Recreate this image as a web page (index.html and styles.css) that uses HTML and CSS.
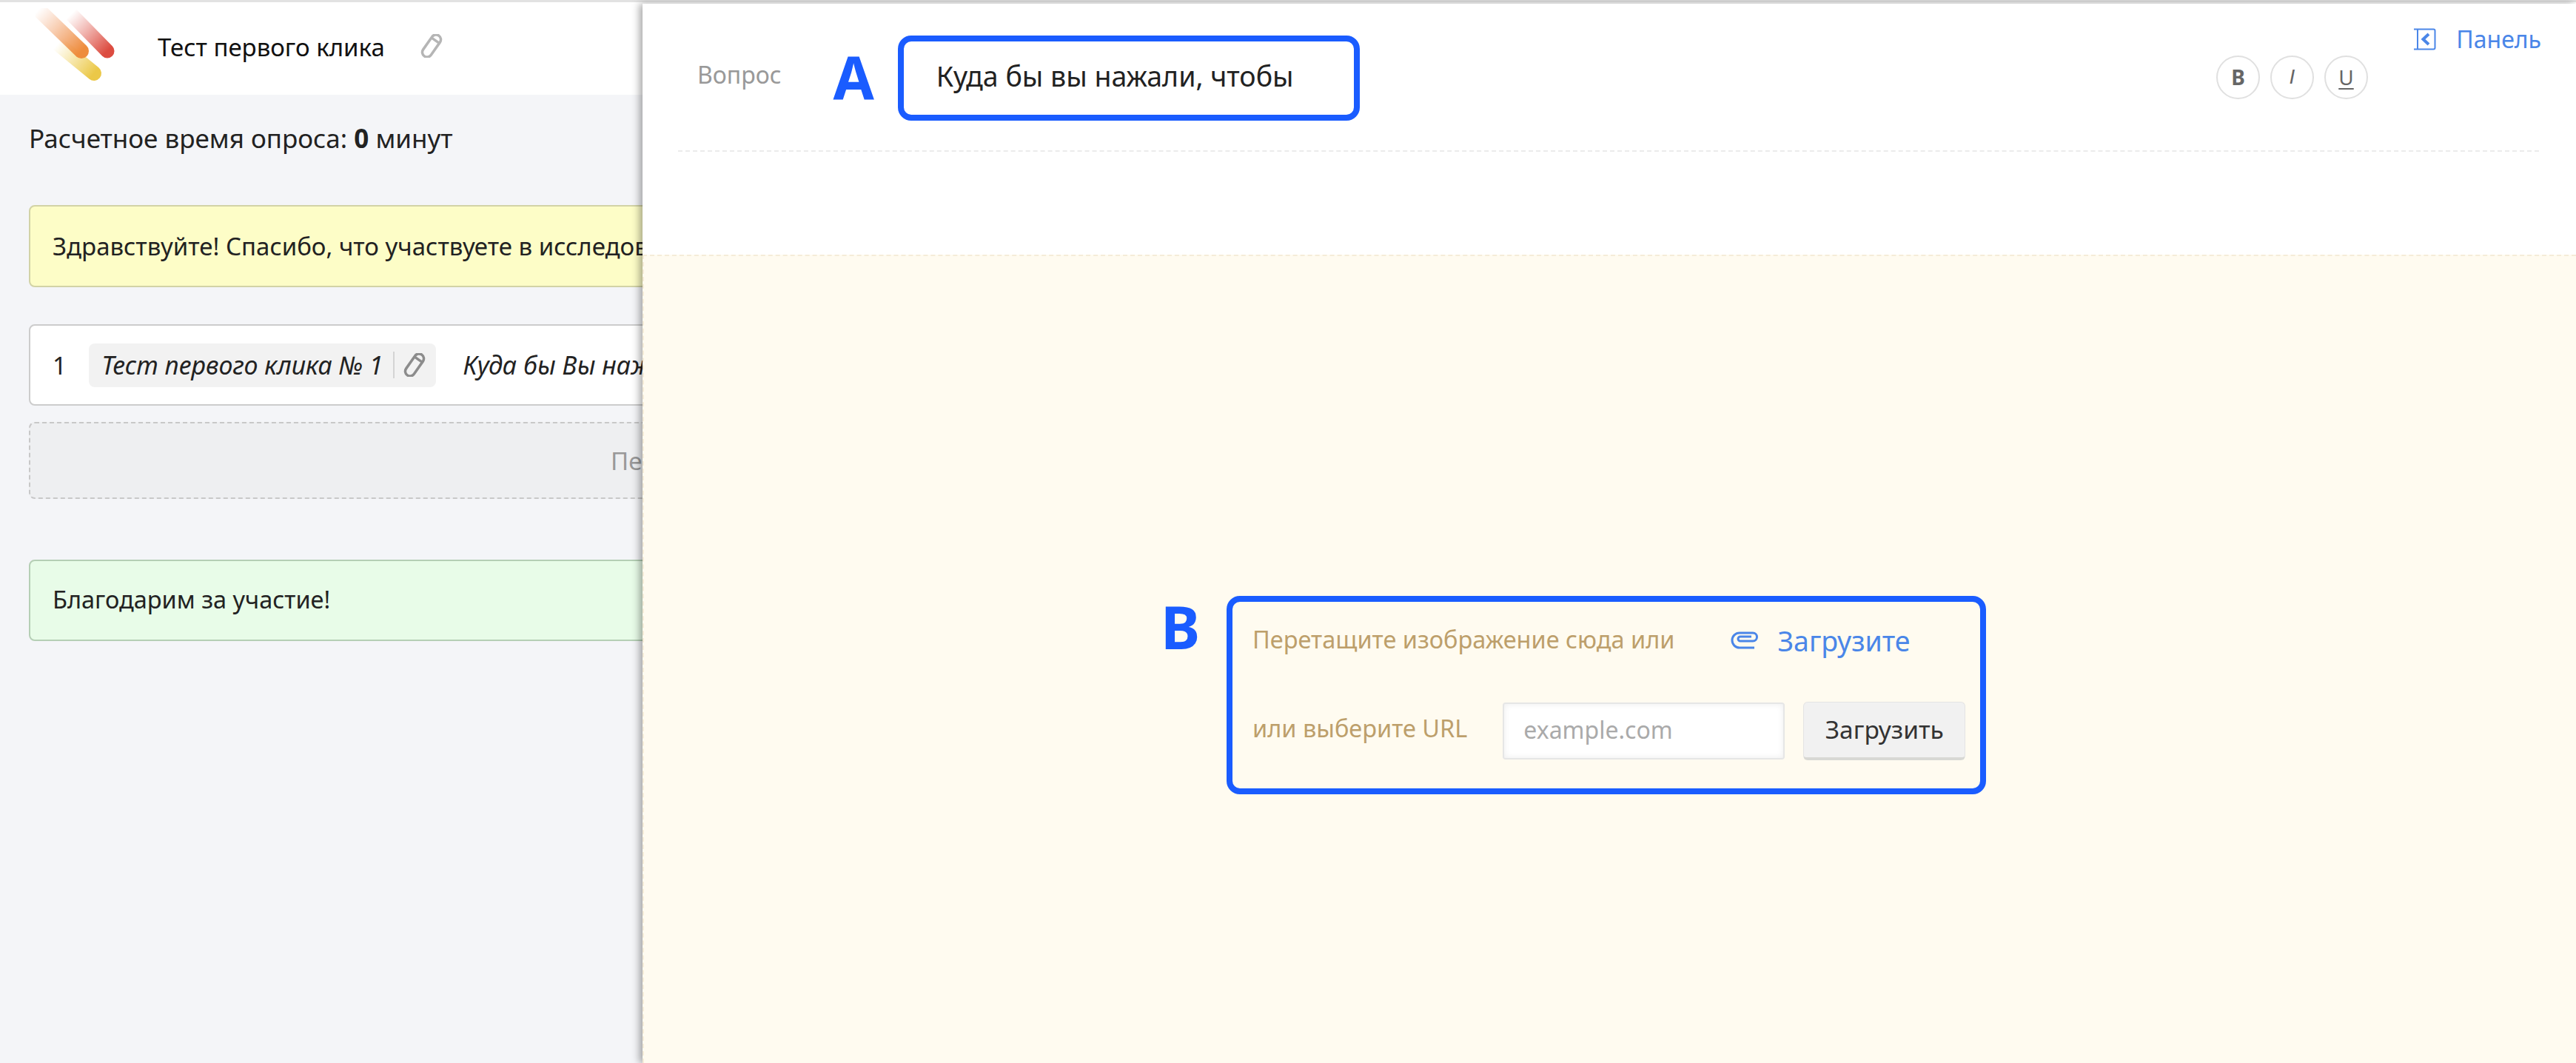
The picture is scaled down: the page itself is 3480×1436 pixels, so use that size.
FILE: index.html
```html
<!DOCTYPE html>
<html lang="ru">
<head>
  <meta charset="UTF-8" />
  <title>Тест первого клика</title>
  <link rel="stylesheet" href="styles.css">
</head>
<body>

<div class="survey">
  <div class="topbar">
    <svg class="logo" width="110" height="110" viewBox="0 0 110 110">
      <defs>
        <linearGradient id="lgRed" gradientUnits="userSpaceOnUse" x1="48" y1="8" x2="97" y2="58"><stop offset="0" stop-color="#e05a4e" stop-opacity="0"/><stop offset="1" stop-color="#dc4c40"/></linearGradient>
        <linearGradient id="lgOrange" gradientUnits="userSpaceOnUse" x1="4" y1="2" x2="62" y2="58"><stop offset="0" stop-color="#f0905a" stop-opacity="0"/><stop offset="1" stop-color="#ee8c3c"/></linearGradient>
        <linearGradient id="lgYellow" gradientUnits="userSpaceOnUse" x1="30" y1="48" x2="79" y2="88"><stop offset="0" stop-color="#efcf55" stop-opacity="0"/><stop offset="1" stop-color="#ebc848"/></linearGradient>
      </defs>
      <path d="M48 8 L97 58" stroke="url(#lgRed)" stroke-width="19" stroke-linecap="round" fill="none"/>
      <path d="M30 48 L79 88" stroke="url(#lgYellow)" stroke-width="20" stroke-linecap="round" fill="none"/>
      <path d="M4 2 L62 58" stroke="url(#lgOrange)" stroke-width="20" stroke-linecap="round" fill="none"/>
    </svg>
    <span class="survey-title">Тест первого клика</span>
    <svg class="pencil" width="32" height="32" viewBox="0 0 32 32"><g transform="translate(16 16) rotate(35)" fill="none" stroke="#b5b5b5" stroke-width="3.5"><rect x="-6.500" y="-17" width="13" height="34" rx="6.500"/><path d="M-6.500 -9 H6.500"/></g></svg>
  </div>

  <div class="content">
    <p class="estimate">Расчетное время опроса: <b>0</b> минут</p>
    <div class="card card-hello">Здравствуйте! Спасибо, что участвуете в исследовании.</div>
    <div class="card card-question">
      <span class="q-num">1</span>
      <span class="chip">
        <em>Тест первого клика № 1</em>
        <span class="chip-sep"></span>
        <svg width="32" height="32" viewBox="0 0 32 32"><g transform="translate(16 16) rotate(35)" fill="none" stroke="#8c8c8c" stroke-width="3.5"><rect x="-6.500" y="-17" width="13" height="34" rx="6.500"/><path d="M-6.500 -9 H6.500"/></g></svg>
      </span>
      <em>Куда бы Вы нажали, чтобы</em>
    </div>
    <div class="add-question">Перетащите сюда вопрос</div>
    <div class="card card-thanks">Благодарим за участие!</div>
  </div>
</div>

<div class="panel">
  <a class="panel-toggle">
    <svg width="30" height="30" viewBox="0 0 30 30"><path d="M0 1.500 H26.500 Q28.500 1.500 28.500 3.500 V26.500 Q28.500 28.500 26.500 28.500 H0 M5 1.500 V28.500" fill="none" stroke="#4a86e8" stroke-width="2"/><path d="M20 8 L12.500 15 L20 22" fill="none" stroke="#4a86e8" stroke-width="4"/></svg>
    Панель
  </a>

  <div class="panel-head">
    <div class="question-row">
      <span class="question-label">Вопрос</span>
      <span class="mark">A</span>
      <div class="question-box">Куда бы вы нажали, чтобы</div>
      <div class="format-btns">
        <span class="format-btn format-b">B</span>
        <span class="format-btn format-i">I</span>
        <span class="format-btn format-u">U</span>
      </div>
    </div>
  </div>

  <div class="dropzone">
    <div class="upload-box">
      <span class="mark mark-b">B</span>
      <div class="upload-row">
        <span class="upload-hint">Перетащите изображение сюда или</span>
        <a class="upload-link">
          <svg width="40" height="26" viewBox="0 0 40 26"><path d="M33 23 H13 A10 10 0 0 1 13 3 H31 A5.500 5.500 0 0 1 31 14 H14 A3 3 0 0 1 14 8 H29" fill="none" stroke="#4a86e8" stroke-width="3"/></svg>
          Загрузите
        </a>
      </div>
      <div class="upload-row upload-row-url">
        <span class="upload-hint upload-hint-url">или выберите URL</span>
        <input class="url-input" type="text" placeholder="example.com">
        <button class="url-btn">Загрузить</button>
      </div>
    </div>
  </div>
</div>

</body>
</html>
```

FILE: styles.css
```css
body {
  margin: 0;
  height: 1436px;
  overflow: hidden;
  position: relative;
  font-family: "Noto Sans", sans-serif;
  font-size: 33px;
  color: #222;
  background-color: #f4f5f8;
}
.topbar {
  display: flex;
  align-items: center;
  height: 125px;
  border-top: 3px solid #e2e2e2;
  background-color: white;
}
.logo {
  margin-left: 48px;
  flex-shrink: 0;
}
.survey-title {
  margin: 0 0 4px 55px;
  color: #111;
}
.pencil {
  margin: 0 0 8px 47px;
}
.content {
  padding: 0 40px 0 39px;
}
.estimate {
  margin: 37px 0 68px;
  line-height: 44px;
  font-size: 35px;
  white-space: nowrap;
}
.card {
  display: flex;
  align-items: center;
  box-sizing: border-box;
  height: 110px;
  padding: 0 30px;
  border: 2px solid #ccc;
  border-radius: 8px;
  white-space: nowrap;
}
.card-hello {
  height: 111px;
  background-color: #fdfdc7;
  border-color: #d2d3a6;
}
.card-question {
  margin-top: 50px;
  background-color: white;
}
.q-num {
  margin-right: 30px;
}
.chip {
  display: flex;
  align-items: center;
  height: 59px;
  padding: 0 13px 0 17px;
  margin-right: 37px;
  border-radius: 8px;
  background-color: #f2f2f2;
}
.card-question em {
  font-size: 34px;
}
.chip-sep {
  width: 2px;
  height: 36px;
  margin: 0 11px 0 13px;
  background-color: #d4d4d4;
}
.add-question {
  display: flex;
  align-items: center;
  box-sizing: border-box;
  height: 104px;
  margin-top: 22px;
  padding-left: 784px;
  border: 2px dashed #c8c8c8;
  border-radius: 8px;
  background-color: #eeeff1;
  color: #999;
  white-space: nowrap;
}
.card-thanks {
  margin-top: 82px;
  padding-bottom: 3px;
  font-size: 32.500px;
  background-color: #e8fce8;
  border-color: #b5cfb5;
}

.panel {
  position: absolute;
  left: 868px;
  top: 5px;
  right: 0;
  bottom: 0;
  display: flex;
  flex-direction: column;
  background-color: white;
  box-shadow: -4px 0 10px rgba(0, 0, 0, 0.35);
}
.panel-toggle {
  position: absolute;
  top: 26px;
  right: 47px;
  display: flex;
  align-items: center;
  gap: 27px;
  font-size: 32px;
  color: #4a86e8;
}
.panel-head {
  height: 339px;
  box-sizing: border-box;
  padding: 0 50px 0 48px;
}
.question-row {
  display: flex;
  align-items: center;
  height: 198px;
  padding-left: 26px;
  border-bottom: 2px dashed #ebebeb;
}
.question-label {
  margin-bottom: 8px;
  color: #999;
  font-size: 32px;
}
.mark {
  font-size: 80px;
  font-weight: bold;
  line-height: 1;
  color: #1a5cff;
}
.question-row .mark {
  margin: 0 32px 0 70px;
}
.question-box {
  box-sizing: border-box;
  width: 624px;
  height: 115px;
  margin-top: 3px;
  padding: 0 44px;
  line-height: 94px;
  font-size: 37.500px;
  border: 8px solid #1a5cff;
  border-radius: 18px;
}
.format-btns {
  display: flex;
  gap: 14px;
  margin-left: auto;
  margin-right: 231px;
}
.format-btn {
  display: flex;
  align-items: center;
  justify-content: center;
  box-sizing: border-box;
  width: 59px;
  height: 59px;
  border: 2px solid #e0e0e0;
  border-radius: 50%;
  font-size: 28px;
  color: #666;
}
.format-b {
  font-weight: bold;
}
.format-i {
  font-family: "Liberation Sans", sans-serif;
  font-style: italic;
}
.format-u {
  text-decoration: underline;
  text-underline-offset: 4px;
}
.dropzone {
  flex: 1;
  display: flex;
  justify-content: center;
  align-items: center;
  padding: 96px 10px 0 0;
  border-top: 2px dashed #f5ecd8;
  border-left: 2px dashed #f5ecd8;
  background-color: #fffbf0;
}
.upload-box {
  position: relative;
  box-sizing: border-box;
  width: 1026px;
  height: 268px;
  padding: 12px 20px 0 27px;
  border: 8px solid #1a5cff;
  border-radius: 18px;
}
.mark-b {
  position: absolute;
  left: -97px;
  top: -7px;
}
.upload-row {
  display: flex;
  align-items: center;
  height: 80px;
}
.upload-row-url {
  margin-top: 42px;
}
.upload-hint {
  margin-bottom: 4px;
  color: #bd9f6b;
  font-size: 32.500px;
  white-space: nowrap;
}
.upload-hint-url {
  margin-bottom: 8px;
}
.upload-link {
  display: flex;
  align-items: center;
  gap: 24px;
  margin-left: 75px;
  font-size: 37.500px;
  color: #4a86e8;
}
.url-input {
  box-sizing: border-box;
  width: 381px;
  height: 77px;
  margin-left: 48px;
  padding: 0 26px 4px;
  border: 2px solid #e6e6e6;
  border-radius: 4px;
  font-family: inherit;
  font-size: 32px;
  background-color: white;
  box-shadow: inset 0 0 8px rgba(0, 0, 0, 0.08);
}
.url-input::placeholder {
  color: #aaa;
}
.url-btn {
  flex-shrink: 0;
  width: 219px;
  height: 79px;
  margin-left: 25px;
  padding: 0 0 2px;
  border: 1px solid #e4e4e4;
  border-bottom: 4px solid #d8d8d4;
  border-radius: 6px;
  font-family: inherit;
  font-size: 33.500px;
  color: #333;
  background-color: #f1f1f1;
}
```
